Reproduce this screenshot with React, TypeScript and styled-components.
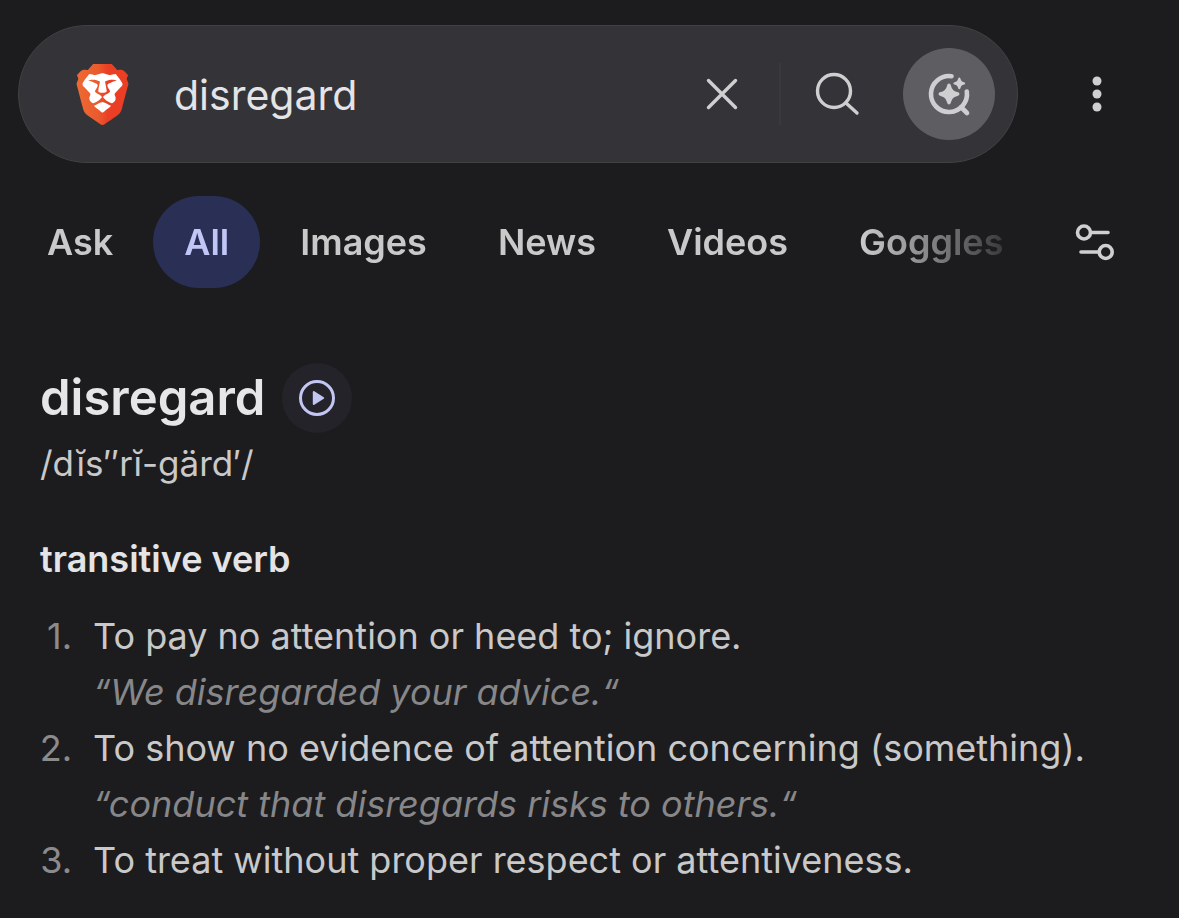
import React, { useState } from "react";
import styled, { createGlobalStyle, css } from "styled-components";

const GlobalStyle = createGlobalStyle`
  *, *::before, *::after { box-sizing: border-box; }
  body {
    margin: 0;
    background: #1c1c1e;
    color: #c9c9ca;
    font-family: Inter, "Liberation Sans", sans-serif;
    font-size: 36px;
    line-height: 56px;
  }
  button, input { font: inherit; color: inherit; }
`;

const Page = styled.div`
  padding-bottom: 24px;
`;

const Header = styled.header`
  display: flex;
  align-items: center;
  gap: 33px;
  padding: 25px 36px 33px 18px;
`;

const SearchForm = styled.form`
  flex: 1;
  min-width: 0;
  display: flex;
  align-items: center;
  height: 138px;
  padding: 0 22px 0 53px;
  background: #343337;
  border: 1px solid #414144;
  border-radius: 69px;
`;

const HomeLink = styled.a`
  display: flex;
  margin-right: 41px;
`;

const SearchInput = styled.input`
  flex: 1;
  min-width: 0;
  padding: 2px 0 0;
  border: 0;
  outline: 0;
  background: none;
  color: #e4e4e6;
  font-size: 41px;
`;

const IconButton = styled.button<{ $size?: number; $fill?: string; $color?: string }>`
  flex: none;
  display: flex;
  align-items: center;
  justify-content: center;
  width: ${(p) => p.$size ?? 92}px;
  height: ${(p) => p.$size ?? 92}px;
  padding: 0;
  border: 0;
  border-radius: 50%;
  background: ${(p) => p.$fill ?? "none"};
  color: ${(p) => p.$color ?? "#cfcfd1"};
  cursor: pointer;
`;

const Divider = styled.span`
  width: 2px;
  height: 62px;
  margin: 0 10px 0 11px;
  background: #3a393d;
`;

const AskSlot = styled.div`
  margin-left: 20px;
`;

const NavRow = styled.div`
  display: flex;
  align-items: center;
  gap: 16px;
  padding: 0 38px 0 16px;
`;

const Tabs = styled.nav`
  flex: 1;
  min-width: 0;
  display: flex;
  gap: 9px;
  overflow: hidden;
  mask-image: linear-gradient(to right, #000 calc(100% - 170px), transparent);
`;

const Tab = styled.a<{ $active?: boolean }>`
  flex: none;
  height: 92px;
  padding: 0 31px;
  border-radius: 46px;
  font-weight: 600;
  line-height: 92px;
  text-decoration: none;
  color: #c9c9ca;
  ${(p) =>
    p.$active &&
    css`
      background: #2a2f55;
      color: #c0c6f5;
    `}
`;

const Entry = styled.main`
  padding: 74px 40px 0;
`;

const TitleRow = styled.div`
  display: flex;
  align-items: center;
  gap: 17px;
`;

const Word = styled.h1`
  margin: 0;
  font-size: 49px;
  font-weight: 600;
  line-height: 72px;
  color: #e6e6e8;
`;

const Phonetic = styled.p`
  margin: 1px 0 0;
  font-size: 35px;
`;

const PartOfSpeech = styled.h2`
  margin: 40px 0 21px;
  font-size: 36px;
  font-weight: 600;
  line-height: 56px;
  color: #e4e4e6;
`;

const Senses = styled.ol`
  margin: 0;
  padding: 0;
  list-style: none;
`;

const Sense = styled.li`
  display: grid;
  grid-template-columns: 32px 1fr;
  column-gap: 21px;
`;

const Num = styled.span`
  justify-self: end;
  color: #8b8b8e;
`;

const Meaning = styled.p`
  margin: 0;
`;

const Example = styled.p`
  grid-column: 2;
  margin: 0;
  font-style: italic;
  color: #87878a;
`;

const Lion = () => (
  <svg width="61" height="61" viewBox="0 0 24 24" aria-hidden="true">
    <defs>
      <linearGradient id="shield" x1="0" x2="1" y1="0" y2="0">
        <stop offset="0" stopColor="#ee6a33" />
        <stop offset="0.42" stopColor="#ea5a2e" />
        <stop offset="0.6" stopColor="#ea3f24" />
        <stop offset="1" stopColor="#ea3f24" />
      </linearGradient>
    </defs>
    <path
      fill="url(#shield)"
      d="M15.68 0l2.096 2.38s1.84-.512 2.709.358c.868.87 1.584 1.638 1.584 1.638l-.562 1.381.715 2.047s-2.104 7.98-2.35 8.955c-.486 1.919-.818 2.66-2.198 3.633-1.38.972-3.884 2.66-4.293 2.916-.409.256-.92.692-1.38.692-.46 0-.97-.436-1.38-.692a185.796 185.796 0 01-4.293-2.916c-1.38-.973-1.712-1.714-2.197-3.633-.247-.975-2.351-8.955-2.351-8.955l.715-2.047-.562-1.381s.716-.768 1.585-1.638c.868-.87 2.708-.358 2.708-.358L8.321 0h7.36z"
    />
    <path
      fill="#fff"
      d="M12.001 14.936c-.14 0-1.038.317-1.758.69-.72.373-1.242.637-1.409.742-.167.104-.065.301.087.409.152.107 2.194 1.69 2.393 1.866.198.175.489.464.687.464.198 0 .49-.29.688-.464.198-.175 2.24-1.759 2.392-1.866.152-.108.254-.305.087-.41-.167-.104-.689-.368-1.41-.741-.72-.373-1.617-.69-1.757-.69zm0-11.278s-.409.001-1.022.206-1.278.46-1.584.46c-.307 0-2.581-.434-2.581-.434S4.119 7.152 4.119 7.849c0 .697.339.881.68 1.243l2.02 2.149c.192.203.59.511.356 1.066-.235.555-.58 1.26-.196 1.977.384.716 1.042 1.194 1.464 1.115.421-.08 1.412-.598 1.776-.834.364-.237 1.518-1.19 1.518-1.554 0-.365-1.193-1.02-1.413-1.168-.22-.15-1.226-.725-1.247-.95-.02-.227-.012-.293.284-.851.297-.559.831-1.304.742-1.8-.089-.495-.95-.753-1.565-.986-.615-.232-1.799-.671-1.947-.74-.148-.068-.11-.133.339-.175.448-.043 1.719-.212 2.292-.052.573.16 1.552.403 1.632.532.079.13.149.134.067.579-.081.445-.5 2.581-.541 2.96-.04.38-.12.63.288.724.409.094 1.097.256 1.333.256s.924-.162 1.333-.256c.408-.093.329-.344.288-.723-.04-.38-.46-2.516-.541-2.961-.082-.445-.012-.45.067-.579.08-.129 1.059-.372 1.632-.532.573-.16 1.845.009 2.292.052.449.042.487.107.339.175-.148.069-1.332.508-1.947.74-.615.233-1.476.49-1.565.986-.09.496.445 1.241.742 1.8.297.558.304.624.284.85-.02.226-1.026.802-1.247.95-.22.15-1.413.804-1.413 1.169 0 .364 1.154 1.317 1.518 1.554.364.236 1.355.755 1.776.834.422.079 1.08-.4 1.464-1.115.384-.716.039-1.422-.195-1.977-.235-.555.163-.863.355-1.066l2.02-2.149c.341-.362.68-.546.68-1.243 0-.697-2.695-3.96-2.695-3.96s-2.274.436-2.58.436c-.307 0-.972-.256-1.585-.461-.613-.205-1.022-.206-1.022-.206z"
    />
  </svg>
);

const stroke = {
  fill: "none",
  stroke: "currentColor",
  strokeLinecap: "round" as const,
  strokeLinejoin: "round" as const,
};

const CloseIcon = () => (
  <svg width="48" height="48" viewBox="0 0 48 48" strokeWidth="3.4" {...stroke} aria-hidden="true">
    <path d="M10.5 10.5l27 27M37.5 10.5l-27 27" />
  </svg>
);

const SearchIcon = () => (
  <svg width="48" height="48" viewBox="0 0 48 48" strokeWidth="3.4" {...stroke} aria-hidden="true">
    <circle cx="21" cy="21" r="16.5" />
    <path d="M33 33l11 10" />
  </svg>
);

const AskIcon = () => (
  <svg width="48" height="48" viewBox="0 0 48 48" strokeWidth="4.6" {...stroke} aria-hidden="true">
    <path d="M26.5 6.200a18 18 0 1 0 15.300 15.300M36 37l6 6" />
    <path
      fill="currentColor"
      stroke="none"
      d="M24 13.500c1 0 1.500.7 1.900 1.900 1.300 4.200 2.400 5.400 6.600 6.700 1.200.4 1.900.9 1.900 1.900s-.7 1.500-1.900 1.900c-4.200 1.300-5.300 2.500-6.600 6.700-.4 1.200-.9 1.900-1.900 1.900s-1.500-.7-1.900-1.900c-1.300-4.200-2.400-5.400-6.600-6.700-1.200-.4-1.900-.9-1.900-1.900s.7-1.500 1.900-1.900c4.200-1.300 5.300-2.500 6.600-6.700.4-1.200.9-1.900 1.900-1.900z"
    />
    <path
      fill="currentColor"
      stroke="none"
      d="M34.300 7.500c.6 0 .9.400 1.100 1.100.7 2.400 1.300 3 3.700 3.700.7.200 1.100.5 1.100 1.100s-.4.900-1.100 1.100c-2.400.7-3 1.300-3.700 3.700-.2.700-.5 1.100-1.100 1.100s-.9-.4-1.100-1.100c-.7-2.400-1.300-3-3.700-3.700-.7-.2-1.100-.5-1.100-1.100s.4-.9 1.100-1.100c2.400-.7 3-1.300 3.700-3.700.2-.7.5-1.100 1.100-1.100z"
    />
  </svg>
);

const MoreIcon = () => (
  <svg width="48" height="48" viewBox="0 0 48 48" fill="currentColor" aria-hidden="true">
    <circle cx="24" cy="11" r="4.500" />
    <circle cx="24" cy="24" r="4.500" />
    <circle cx="24" cy="37" r="4.500" />
  </svg>
);

const FiltersIcon = () => (
  <svg width="48" height="48" viewBox="0 0 48 48" strokeWidth="3.6" {...stroke} aria-hidden="true">
    <circle cx="13" cy="14.5" r="6.5" />
    <path d="M20 14.5h17M10 34h17" />
    <circle cx="34.7" cy="34" r="6.5" />
  </svg>
);

const PlayIcon = () => (
  <svg width="40" height="40" viewBox="0 0 40 40" strokeWidth="3" {...stroke} aria-hidden="true">
    <circle cx="20" cy="20" r="16.5" />
    <path fill="currentColor" strokeWidth="2" d="M16.800 14v12l9.400-6z" />
  </svg>
);

const tabs = ["Ask", "All", "Images", "News", "Videos", "Goggles"];

const senses = [
  { text: "To pay no attention or heed to; ignore.", example: "“We disregarded your advice.“" },
  {
    text: "To show no evidence of attention concerning (something).",
    example: "“conduct that disregards risks to others.“",
  },
  { text: "To treat without proper respect or attentiveness." },
];

export default function App() {
  const [query, setQuery] = useState("disregard");

  return (
    <Page>
      <GlobalStyle />
      <Header>
        <SearchForm role="search" onSubmit={(e) => e.preventDefault()}>
          <HomeLink href="#" aria-label="Home">
            <Lion />
          </HomeLink>
          <SearchInput aria-label="Search" value={query} onChange={(e) => setQuery(e.target.value)} />
          <IconButton type="button" aria-label="Clear" onClick={() => setQuery("")}>
            <CloseIcon />
          </IconButton>
          <Divider />
          <IconButton type="submit" aria-label="Search">
            <SearchIcon />
          </IconButton>
          <AskSlot>
            <IconButton type="button" aria-label="Ask" $fill="#5e5d62">
              <AskIcon />
            </IconButton>
          </AskSlot>
        </SearchForm>
        <IconButton type="button" aria-label="More options">
          <MoreIcon />
        </IconButton>
      </Header>

      <NavRow>
        <Tabs aria-label="Result types">
          {tabs.map((name) => (
            <Tab key={name} href="#" $active={name === "All"}>
              {name}
            </Tab>
          ))}
        </Tabs>
        <IconButton type="button" aria-label="Filters">
          <FiltersIcon />
        </IconButton>
      </NavRow>

      <Entry>
        <TitleRow>
          <Word>disregard</Word>
          <IconButton
            type="button"
            aria-label="Play pronunciation"
            $size={70}
            $fill="#242329"
            $color="#c3c6f3"
          >
            <PlayIcon />
          </IconButton>
        </TitleRow>
        <Phonetic>/dĭs′′rĭ-gärd′/</Phonetic>
        <PartOfSpeech>transitive verb</PartOfSpeech>
        <Senses>
          {senses.map((sense, i) => (
            <Sense key={sense.text}>
              <Num>{i + 1}.</Num>
              <Meaning>{sense.text}</Meaning>
              {sense.example && <Example>{sense.example}</Example>}
            </Sense>
          ))}
        </Senses>
      </Entry>
    </Page>
  );
}
